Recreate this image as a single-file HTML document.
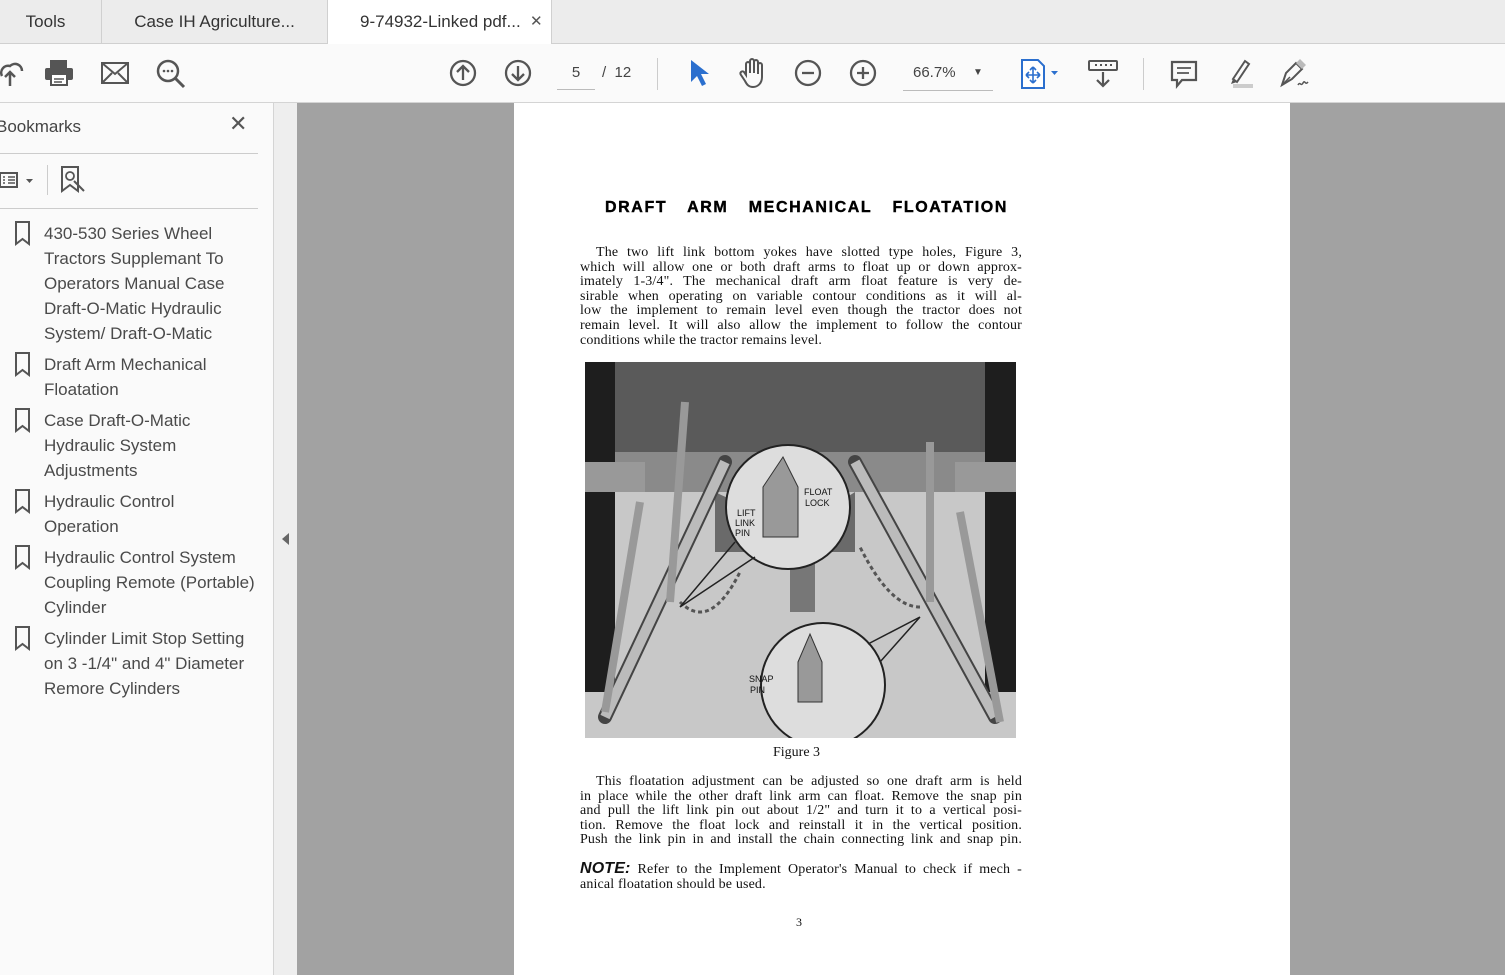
<!DOCTYPE html>
<html><head><style>
*{margin:0;padding:0;box-sizing:border-box}
body{width:1505px;height:975px;overflow:hidden;font-family:"Liberation Sans",sans-serif;background:#fff;position:relative}
.tabs{position:absolute;left:0;top:0;width:1505px;height:44px;background:#ececec;border-bottom:1px solid #d0d0d0}
.tab{position:absolute;top:0;height:44px;font-size:17px;color:#333;line-height:44px}
.tb{position:absolute;top:44px;left:0;width:1505px;height:59px;background:#fafafa;border-bottom:1px solid #d4d4d4}
.ic{position:absolute}
.side{position:absolute;left:0;top:103px;width:274px;height:872px;background:#fafafa;border-right:1px solid #d4d4d4}
.strip{position:absolute;left:274px;top:103px;width:23px;height:872px;background:#eeeeee}
.gray{position:absolute;left:297px;top:103px;width:1208px;height:872px;background:#a2a2a2}
.page{position:absolute;left:514px;top:103px;width:776px;height:872px;background:#fff}
.bm{position:absolute;left:44px;font-size:17px;color:#4a4a4a;line-height:25px;white-space:nowrap;letter-spacing:0px}
.txt{position:absolute;left:580px;width:442px;font-family:"Liberation Serif",serif;font-size:14px;line-height:14.6px;color:#111;letter-spacing:0.15px}
.txt div{text-align:justify;text-align-last:justify;white-space:nowrap;overflow:hidden}
.txt div.l{text-align-last:left}
</style></head><body>
<div class="tabs">
 <div class="tab" style="left:0;width:102px;border-right:1px solid #d0d0d0;text-align:center;padding-right:10px">Tools</div>
 <div class="tab" style="left:102px;width:226px;border-right:1px solid #d0d0d0;text-align:center">Case IH Agriculture...</div>
 <div class="tab" style="left:328px;width:224px;background:#fff;height:45px;padding-left:32px;border-right:1px solid #d0d0d0">9-74932-Linked pdf... <span style="position:absolute;left:202px;font-size:15px;color:#555">✕</span></div>
</div>
<div class="tb">
 <svg class="ic" style="left:0;top:14px" width="24" height="30" viewBox="0 0 24 30"><path d="M2 18a7 7 0 0 1 8-10a7 7 0 0 1 12 5" fill="none" stroke="#555" stroke-width="2.5"/><path d="M10 28V14M5 19l5-5 5 5" fill="none" stroke="#555" stroke-width="2.5"/></svg>
 <svg class="ic" style="left:44px;top:15px" width="30" height="28"><rect x="6" y="1" width="17" height="8" fill="#555"/><rect x="1" y="9" width="28" height="12" rx="2" fill="#555"/><rect x="7" y="15" width="16" height="11" fill="#fff" stroke="#555" stroke-width="2"/><path d="M10 20h10M10 23h8" stroke="#555" stroke-width="1.5"/></svg>
 <svg class="ic" style="left:101px;top:18px" width="28" height="22"><rect x="1" y="1" width="26" height="20" fill="none" stroke="#555" stroke-width="2"/><path d="M1 1l13 11 13-11M1 21l10-10M27 21l-10-10" fill="none" stroke="#555" stroke-width="2"/></svg>
 <svg class="ic" style="left:155px;top:14px" width="32" height="32"><circle cx="13" cy="13" r="10" fill="none" stroke="#555" stroke-width="2.5"/><path d="M20 20l9 9" stroke="#555" stroke-width="3"/><circle cx="9" cy="13" r="1.3" fill="#555"/><circle cx="13" cy="13" r="1.3" fill="#555"/><circle cx="17" cy="13" r="1.3" fill="#555"/></svg>
 <svg class="ic" style="left:449px;top:15px" width="28" height="28"><circle cx="14" cy="14" r="12" fill="none" stroke="#555" stroke-width="2.3"/><path d="M14 21V8M8 13l6-6 6 6" fill="none" stroke="#555" stroke-width="2.3"/></svg>
 <svg class="ic" style="left:504px;top:15px" width="28" height="28"><circle cx="14" cy="14" r="12" fill="none" stroke="#555" stroke-width="2.3"/><path d="M14 7v13M8 15l6 6 6-6" fill="none" stroke="#555" stroke-width="2.3"/></svg>
 <div style="position:absolute;left:557px;top:20px;width:38px;border-bottom:1px solid #bbb;font-size:15px;color:#444;text-align:center;height:26px">5</div>
 <div style="position:absolute;left:602px;top:20px;font-size:15px;color:#444">/ &nbsp;12</div>
 <div style="position:absolute;left:657px;top:14px;width:1px;height:32px;background:#ccc"></div>
 <svg class="ic" style="left:688px;top:15px" width="22" height="28"><path d="M3 1v22l6-6 5 10 4-2-5-10h8z" fill="#2b6fce"/></svg>
 <svg class="ic" style="left:738px;top:13px" width="30" height="32"><path d="M8 18V7a2 2 0 0 1 4 0v9V4a2 2 0 0 1 4 0v12V5a2 2 0 0 1 4 0v12V8a2 2 0 0 1 4 0v12c0 6-4 10-9 10-4 0-6-2-8-6l-4-6a2 2 0 0 1 3-3z" fill="none" stroke="#555" stroke-width="2"/></svg>
 <svg class="ic" style="left:794px;top:15px" width="28" height="28"><circle cx="14" cy="14" r="12" fill="none" stroke="#555" stroke-width="2.3"/><path d="M8 14h12" stroke="#555" stroke-width="2.3"/></svg>
 <svg class="ic" style="left:849px;top:15px" width="28" height="28"><circle cx="14" cy="14" r="12" fill="none" stroke="#555" stroke-width="2.3"/><path d="M8 14h12M14 8v12" stroke="#555" stroke-width="2.3"/></svg>
 <div style="position:absolute;left:903px;top:20px;width:90px;height:27px;border-bottom:1px solid #bbb;font-size:15px;color:#444;padding-left:10px">66.7% <span style="position:absolute;left:70px;font-size:10px;top:3px">▼</span></div>
 <svg class="ic" style="left:1019px;top:14px" width="44" height="32"><path d="M3 2h16l6 6v22H3z" fill="#fff" stroke="#2b6fce" stroke-width="2"/><path d="M14 9v16M7 17h14M14 9l-3 3M14 9l3 3M14 25l-3-3M14 25l3-3M7 17l3-3M7 17l3 3M21 17l-3-3M21 17l-3 3" stroke="#2b6fce" stroke-width="1.6" fill="none"/><path d="M32 13h7l-3.5 4z" fill="#2b6fce"/></svg>
 <svg class="ic" style="left:1088px;top:16px" width="30" height="28"><rect x="1" y="1" width="28" height="9" rx="1" fill="none" stroke="#555" stroke-width="2"/><path d="M7 5h2M12 5h2M17 5h2M22 5h2" stroke="#555" stroke-width="2"/><path d="M15 12v14M9 20l6 6 6-6" fill="none" stroke="#555" stroke-width="2.2"/></svg>
 <div style="position:absolute;left:1143px;top:14px;width:1px;height:32px;background:#ccc"></div>
 <svg class="ic" style="left:1170px;top:16px" width="28" height="30"><path d="M2 2h24v18H12l-5 6v-6H2z" fill="none" stroke="#555" stroke-width="2.2"/><path d="M7 8h14M7 13h12" stroke="#555" stroke-width="1.8"/></svg>
 <svg class="ic" style="left:1223px;top:13px" width="32" height="32"><path d="M10 22l12-18 4 3-12 18z" fill="none" stroke="#555" stroke-width="2"/><path d="M10 22l-2 5 6-2" fill="#555"/><rect x="10" y="27" width="20" height="4" fill="#ccc"/></svg>
 <svg class="ic" style="left:1278px;top:13px" width="32" height="32"><path d="M4 28l4-12 10-10 6 6-10 10z" fill="none" stroke="#555" stroke-width="2"/><path d="M4 28l8-8" stroke="#555" stroke-width="1.5"/><path d="M18 6l4-4 6 6-4 4" fill="#bbb"/><path d="M20 28c2-4 3 2 5-2s2 3 5-1" fill="none" stroke="#555" stroke-width="1.5"/></svg>
</div>
<div class="side">
 <div style="position:absolute;left:-4px;top:14px;font-size:17px;color:#444">Bookmarks</div>
 <div style="position:absolute;left:229px;top:8px;font-size:22px;color:#555">✕</div>
 <div style="position:absolute;left:0;top:50px;width:258px;height:1px;background:#ccc"></div>
 <svg class="ic" style="left:0;top:68px" width="40" height="20"><rect x="0" y="2" width="17" height="14" fill="none" stroke="#555" stroke-width="2"/><path d="M3 6h2M3 9h2M3 12h2M8 6h7M8 9h7M8 12h7" stroke="#555" stroke-width="1.5"/><path d="M26 8h7l-3.5 4z" fill="#555"/></svg>
 <div style="position:absolute;left:47px;top:62px;width:1px;height:30px;background:#ccc"></div>
 <svg class="ic" style="left:60px;top:62px" width="28" height="30"><path d="M2 2h16v24l-8-6-8 6z" fill="none" stroke="#555" stroke-width="2"/><circle cx="10" cy="11" r="4" fill="none" stroke="#555" stroke-width="1.8"/><path d="M14 16l10 10" stroke="#555" stroke-width="2"/></svg>
 <div style="position:absolute;left:0;top:105px;width:258px;height:1px;background:#ccc"></div>
</div>
<svg style="position:absolute;left:0;top:0" width="274" height="975">
 <g fill="none" stroke="#555" stroke-width="2">
 <path d="M16 222h13v22l-6.5-5-6.5 5z"/><path d="M16 353h13v22l-6.5-5-6.5 5z"/><path d="M16 409h13v22l-6.5-5-6.5 5z"/><path d="M16 490h13v22l-6.5-5-6.5 5z"/><path d="M16 546h13v22l-6.5-5-6.5 5z"/><path d="M16 627h13v22l-6.5-5-6.5 5z"/>
 </g></svg>
<div class="bm" style="top:221px">430-530 Series Wheel<br>Tractors Supplemant To<br>Operators Manual Case<br>Draft-O-Matic Hydraulic<br>System/ Draft-O-Matic</div>
<div class="bm" style="top:352px">Draft Arm Mechanical<br>Floatation</div>
<div class="bm" style="top:408px">Case Draft-O-Matic<br>Hydraulic System<br>Adjustments</div>
<div class="bm" style="top:489px">Hydraulic Control<br>Operation</div>
<div class="bm" style="top:545px">Hydraulic Control System<br>Coupling Remote (Portable)<br>Cylinder</div>
<div class="bm" style="top:626px">Cylinder Limit Stop Setting<br>on 3 -1/4" and 4" Diameter<br>Remore Cylinders</div>
<div class="strip"><div style="position:absolute;left:8px;top:430px;width:0;height:0;border-top:6px solid transparent;border-bottom:6px solid transparent;border-right:7px solid #666"></div></div>
<div class="gray"></div>
<div class="page"></div>
<div style="position:absolute;left:605px;top:199px;width:403px;font-family:'Liberation Sans',sans-serif;font-weight:900;font-size:16px;color:#000;letter-spacing:1.6px;text-align:justify;text-align-last:justify;white-space:nowrap;-webkit-text-stroke:0.4px #000">DRAFT ARM MECHANICAL FLOATATION</div>
<div class="txt" style="top:246px">
<div style="padding-left:16px">The two lift link bottom yokes have slotted type holes, Figure 3,</div>
<div>which will allow one or both draft arms to float up or down approx-</div>
<div>imately 1-3/4". The mechanical draft arm float feature is very de-</div>
<div>sirable when operating on variable contour conditions as it will al-</div>
<div>low the implement to remain level even though the tractor does not</div>
<div>remain level. It will also allow the implement to follow the contour</div>
<div class="l">conditions while the tractor remains level.</div>
</div>
<svg style="position:absolute;left:585px;top:362px" width="431" height="376" viewBox="0 0 431 376">
 <rect width="431" height="376" fill="#c8c8c8"/>
 <rect width="431" height="130" fill="#5a5a5a"/>
 <rect x="0" y="90" width="431" height="40" fill="#8a8a8a"/>
 <rect x="0" y="0" width="30" height="330" fill="#1e1e1e"/>
 <rect x="400" y="0" width="31" height="330" fill="#1e1e1e"/>
 <rect x="0" y="100" width="60" height="30" fill="#999"/><rect x="370" y="100" width="61" height="30" fill="#999"/>
 <path d="M130 130q80 40 140 0v60h-140z" fill="#6a6a6a"/>
 <rect x="205" y="180" width="25" height="70" fill="#777"/>
 <g stroke="#444" stroke-width="14" stroke-linecap="round" fill="none"><path d="M140 100L20 355"/><path d="M270 100L410 355"/></g>
 <g stroke="#bbb" stroke-width="10" fill="none"><path d="M140 100L20 355"/><path d="M270 100L410 355"/></g>
 <g stroke="#999" stroke-width="8" fill="none"><path d="M100 40L85 240"/><path d="M345 80L345 240"/><path d="M55 140L20 350"/><path d="M375 150L415 360"/></g>
 <path d="M95 240q30 30 60-30M335 245q-30 0-60-60" stroke="#555" stroke-width="3" fill="none" stroke-dasharray="4 3"/>
 <circle cx="203" cy="145" r="62" fill="#ddd" stroke="#222" stroke-width="2"/>
 <circle cx="238" cy="323" r="62" fill="#ddd" stroke="#222" stroke-width="2"/>
 <path d="M150 180L95 245M170 195L95 245M283 282L335 255M295 300L335 255" stroke="#222" stroke-width="1.5"/>
 <path d="M178 125l20-30 15 30v50h-35z" fill="#999" stroke="#333"/><path d="M213 300l12-28 12 28v40h-24z" fill="#999" stroke="#333"/>
 <g font-family="Liberation Sans,sans-serif" font-size="9" fill="#111"><text x="219" y="133">FLOAT</text><text x="220" y="144">LOCK</text><text x="152" y="154">LIFT</text><text x="150" y="164">LINK</text><text x="150" y="174">PIN</text><text x="164" y="320">SNAP</text><text x="165" y="331">PIN</text></g>
</svg>
<div style="position:absolute;left:773px;top:745px;font-family:'Liberation Serif',serif;font-size:14px;color:#111">Figure 3</div>
<div class="txt" style="top:775px">
<div style="padding-left:16px">This floatation adjustment can be adjusted so one draft arm is held</div>
<div>in place while the other draft link arm can float. Remove the snap pin</div>
<div>and pull the lift link pin out about 1/2" and turn it to a vertical posi-</div>
<div>tion. Remove the float lock and reinstall it in the vertical position.</div>
<div>Push the link pin in and install the chain connecting link and snap pin.</div>
</div>
<div class="txt" style="top:862px">
<div><b style="font-family:'Liberation Sans',sans-serif;font-style:italic;font-size:16px;font-weight:900">NOTE:</b> Refer to the Implement Operator's Manual to check if mech -</div>
<div class="l">anical floatation should be used.</div>
</div>
<div style="position:absolute;left:796px;top:915px;font-family:'Liberation Serif',serif;font-size:12px;color:#111">3</div>
</body></html>
